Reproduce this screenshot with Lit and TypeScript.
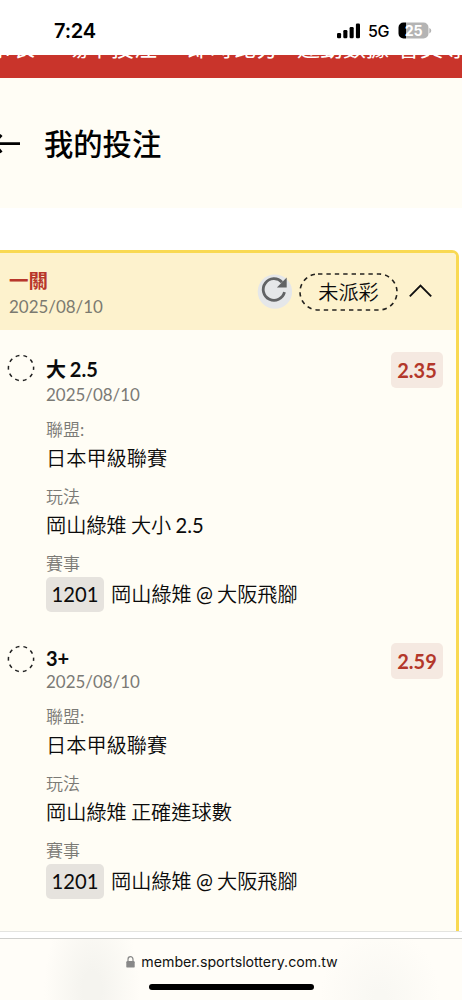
import { LitElement, html, css } from "lit";
import { customElement, property } from "lit/decorators.js";

interface Bet {
  pick: string;
  latin: boolean;
  date: string;
  odds: string;
  league: string;
  play: string;
  code: string;
  match: string;
}

const BETS: Bet[] = [
  { pick: "大 2.5", latin: false, date: "2025/08/10", odds: "2.35", league: "日本甲級聯賽", play: "岡山綠雉 大小 2.5", code: "1201", match: "岡山綠雉 @ 大阪飛腳" },
  { pick: "3+", latin: true, date: "2025/08/10", odds: "2.59", league: "日本甲級聯賽", play: "岡山綠雉 正確進球數", code: "1201", match: "岡山綠雉 @ 大阪飛腳" },
];

@customElement("bet-item")
export class BetItem extends LitElement {
  @property({ attribute: false }) bet!: Bet;

  static styles = css`
    :host { display: block; }
    .item { display: flex; align-items: flex-start; height: 287px; }
    .item.tall { height: 291px; }
    .ring { flex: none; width: 28px; height: 28px; margin: 0 11px 0 7px; }
    .ring svg { display: block; }
    .body { flex: 1; min-width: 0; white-space: nowrap; }
    .pick { height: 22px; line-height: 23px; margin-top: 2px; font-size: 20px; font-weight: 700; word-spacing: -1px; }
    .tall .pick { height: 26px; line-height: 26px; margin-top: 2px; }
    .date { height: 26px; line-height: 26px; font-size: 16.95px; color: #7b7a75; }
    .label { height: 26px; line-height: 26px; margin-top: 9px; font-size: 17px; color: #7b7a75; font-family: Lato, "Noto Sans CJK TC DemiLight", "Noto Sans CJK TC", sans-serif; }
    .value { height: 30px; line-height: 30px; font-size: 20.2px; word-spacing: -1px; }
    .gap { margin-top: 11px; }
    .match { display: flex; align-items: center; height: 35px; line-height: 35px; font-size: 20.2px; gap: 7px; word-spacing: -1px; }
    .value, .match { font-family: Lato, "Noto Sans CJK TC DemiLight", "Noto Sans CJK TC", sans-serif; }
    .code { width: 58px; height: 35px; border-radius: 5px; background: #e6e3de; text-align: center; }
    .odds { flex: none; width: 52px; height: 36px; line-height: 37px; margin: -2px 13px 0 0; border-radius: 5px; background: #f5e9e1; color: #b3372a; font-size: 20px; font-weight: 700; text-align: center; }
  `;

  render() {
    const b = this.bet;
    return html`<div class="item ${b.latin ? "" : "tall"}">
      <div class="ring"><svg width="28" height="28" viewBox="0 0 28 28"><circle cx="14" cy="14" r="12.6" fill="none" stroke="#222" stroke-width="1.5" stroke-dasharray="3.8 4.12" stroke-dashoffset="1.9" /></svg></div>
      <div class="body">
        <div class="pick">${b.pick}</div>
        <div class="date">${b.date}</div>
        <div class="label">聯盟:</div>
        <div class="value">${b.league}</div>
        <div class="label gap">玩法</div>
        <div class="value">${b.play}</div>
        <div class="label gap">賽事</div>
        <div class="match"><span class="code">${b.code}</span><span>${b.match}</span></div>
      </div>
      <div class="odds">${b.odds}</div>
    </div>`;
  }
}

@customElement("app-root")
export class AppRoot extends LitElement {
  static styles = css`
    :host { display: block; width: 462px; height: 1000px; overflow: hidden; background: #fff; color: #0b0b0b; font-family: Lato, "Noto Sans CJK TC", sans-serif; }
    * { box-sizing: border-box; }
    .status { display: flex; align-items: center; height: 55px; padding: 7px 30px 0 54px; font-family: Inter, sans-serif; color: #000; }
    .time { flex: 1; font-size: 20px; line-height: 24px; font-weight: 600; letter-spacing: -0.2px; }
    .net { width: 22px; margin: 0 8px 0 7px; font-size: 16px; font-weight: 450; letter-spacing: -0.3px; line-height: 20px; white-space: nowrap; }
    .status svg { display: block; }
    .nav { display: flex; align-items: flex-end; height: 23px; overflow: hidden; background: #c9342b; color: #fff; }
    .links { display: flex; flex: none; height: 48px; margin-left: -34px; line-height: 34px; font-size: 23px; white-space: nowrap; }
    .links span { margin-right: 30px; }
    .links .wide { margin-right: 8px; }
    .links .mid { margin-right: 18px; }
    .head { display: flex; align-items: center; height: 130px; padding-top: 2px; background: #fffdf5; }
    .head svg { flex: none; display: block; }
    h1 { margin: 0 0 0 23px; font-size: 29.3px; line-height: 40px; font-weight: 500; color: #000; }
    .card { height: 681px; width: 468px; margin: 42px 0 0 -9px; border: 3px solid #f9d952; border-bottom: 0; border-radius: 7px 7px 0 0; background: #fffdf5; overflow: hidden; }
    .top { display: flex; align-items: center; height: 77px; padding: 0 24px 0 15px; background: #fdf2cd; }
    .info { flex: 1; padding-top: 3px; }
    .legs { font-size: 19.5px; line-height: 26px; height: 26px; font-weight: 700; color: #b8372b; }
    .day { font-size: 16.95px; line-height: 25px; height: 25px; color: #7b7a70; }
    .reload, .chev { margin-top: -2px; }
    .pill { position: relative; display: grid; place-items: center; width: 99px; height: 38px; margin: 0 11px 0 7px; font-size: 20.2px; font-family: Lato, "Noto Sans CJK TC DemiLight", "Noto Sans CJK TC", sans-serif; }
    .pill svg { position: absolute; inset: 0; }
    .bets { padding: 24px 0 0 6px; }
    .foot { height: 69px; border-top: 1px solid #e4e4e0; background: #fff; padding-top: 6px; }
    .bar { height: 62px; border-top: 1px solid #cfcfcc; display: flex; flex-direction: column; align-items: center; background: radial-gradient(ellipse 48px 90px at 92px 50px, #f5f4ef 20%, #f5f4ef00 100%), radial-gradient(ellipse 60px 70px at 380px 58px, #f9f8f3 10%, #f9f8f300 100%), #fffdf8; }
    .url { display: flex; align-items: center; gap: 6px; height: 20px; margin: 13px 0 0 2px; font: 400 14.2px/20px Inter, sans-serif; color: #111; }
    .home { width: 165px; height: 6px; margin-top: 12px; border-radius: 3px; background: #000; }
  `;

  render() {
    return html`
      <div class="status">
        <span class="time">7:24</span>
        <svg width="24" height="16" viewBox="0 0 24 16"><rect x="0" y="10" width="4.1" height="5.2" rx="1.2" /><rect x="6.3" y="7" width="4.1" height="8.2" rx="1.2" /><rect x="12.6" y="4" width="4.1" height="11.2" rx="1.2" /><rect x="18.9" y="0.6" width="4.1" height="14.6" rx="1.2" /></svg>
        <span class="net">5G</span>
        <svg width="34" height="18" viewBox="0 0 34 18">
          <path d="M8 .5H5.5A5 5 0 0 0 .5 5.5v6a5 5 0 0 0 5 5H8z" />
          <path d="M8 .5h17.5a5 5 0 0 1 5 5v6a5 5 0 0 1-5 5H8zM31.3 6q2 .8 2 2.7t-2 2.7z" fill="#b4b4b4" />
          <text x="15.7" y="13.6" text-anchor="middle" font-family="Inter" font-weight="700" font-size="14.2" fill="#fff">25</text>
        </svg>
      </div>
      <div class="nav"><div class="links"><span>賽事表</span><span>場中投注</span><span class="mid">即時比分</span><span class="wide">運動數據</span><span>會員專區</span></div></div>
      <div class="head">
        <svg width="21" height="24" viewBox="0 0 21 24"><path d="M20 11.7H-4M1.5 3L-6 11.7L1.5 20.4" fill="none" stroke="#000" stroke-width="2.7" /></svg>
        <h1>我的投注</h1>
      </div>
      <div class="card">
        <div class="top">
          <div class="info"><div class="legs">一關</div><div class="day">2025/08/10</div></div>
          <svg class="reload" width="35" height="36" viewBox="0 0 35 36"><circle cx="17.9" cy="18.6" r="17.2" fill="#e5e7e9" /><path d="M27.5 19.2A10.8 10.8 0 1 1 25 9.2" fill="none" stroke="#616365" stroke-width="2.8" /><path d="M29.7 4.6V14.4H19.9z" fill="#616365" /></svg>
          <div class="pill"><svg width="99" height="38" viewBox="0 0 99 38"><rect x="1" y="1" width="97" height="36" rx="18" fill="none" stroke="#24231f" stroke-width="1.6" stroke-dasharray="4.4 4" /></svg><span>未派彩</span></div>
          <svg class="chev" width="23" height="14" viewBox="0 0 23 14"><path d="M.8 12.3L11.5 1.6L22.2 12.3" fill="none" stroke="#111" stroke-width="1.9" /></svg>
        </div>
        <div class="bets">${BETS.map((b) => html`<bet-item .bet=${b}></bet-item>`)}</div>
      </div>
      <div class="foot"><div class="bar">
        <div class="url"><svg width="9" height="12" viewBox="0 0 9 12"><path d="M2 5.5V3.4a2.5 2.7 0 0 1 5 0V5.5" fill="none" stroke="#888" stroke-width="1.2" /><rect x=".3" y="5" width="8.4" height="6.6" rx="1.2" fill="#888" /></svg><span>member.sportslottery.com.tw</span></div>
        <div class="home"></div>
      </div></div>
    `;
  }
}
